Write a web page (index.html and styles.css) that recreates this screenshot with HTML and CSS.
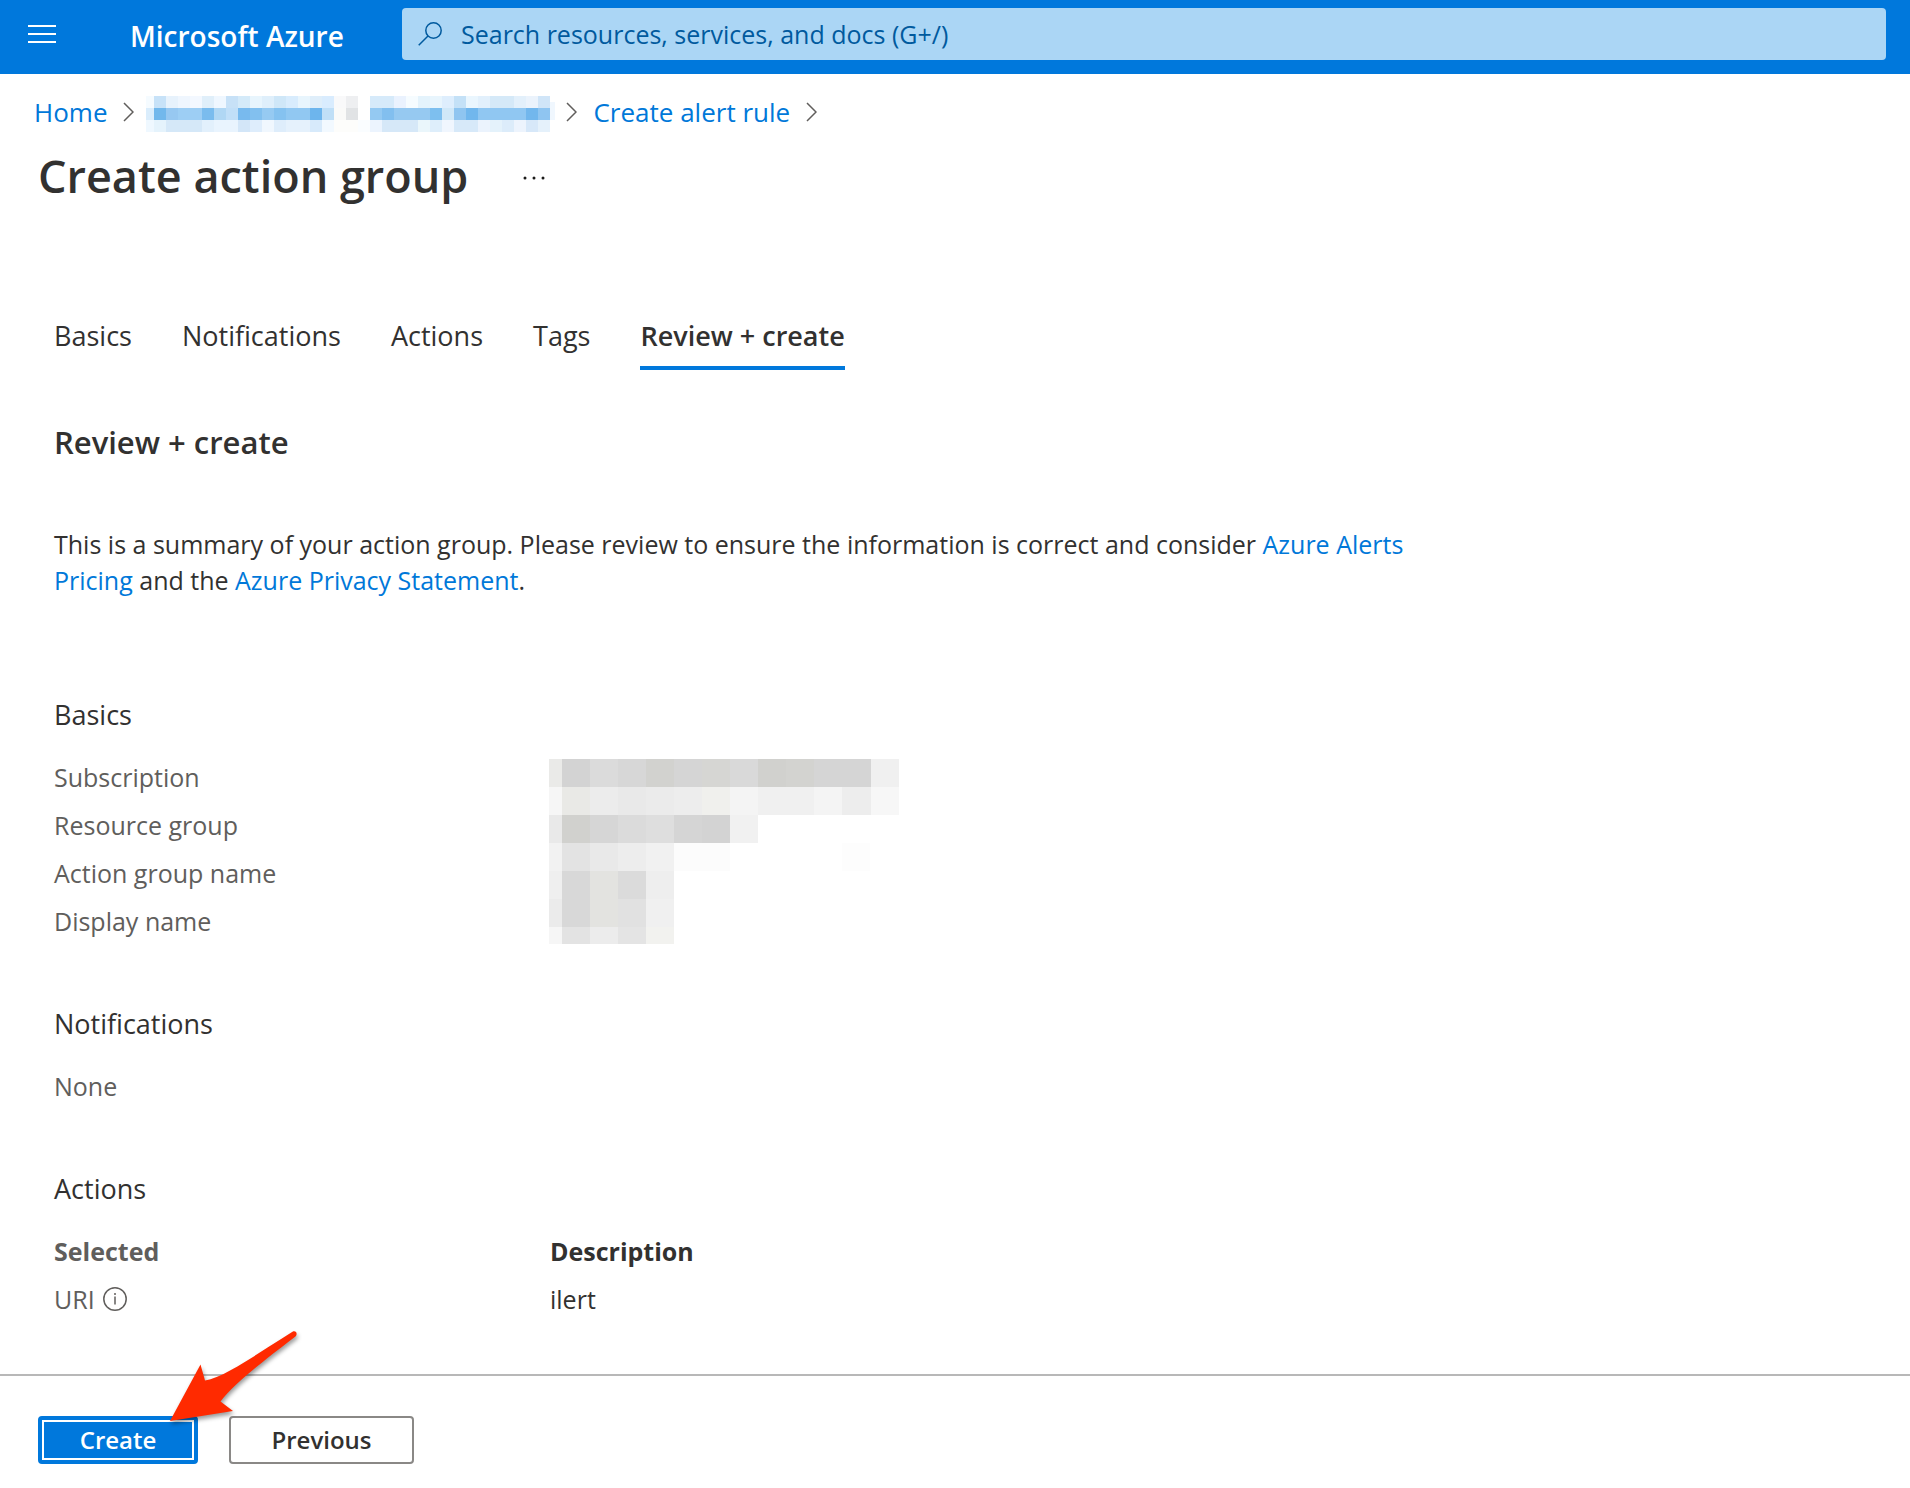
FILE: index.html
```html
<!DOCTYPE html>
<html lang="en">
<head>
<meta charset="utf-8">
<title>Create action group - Microsoft Azure</title>
<meta name="viewport" content="width=device-width, initial-scale=1">
<link rel="stylesheet" href="styles.css">
</head>
<body>
<header class="topbar">
  <button class="menu-button" type="button" aria-label="Show portal menu">
    <svg width="28" height="18" viewBox="0 0 28 18"><path d="M0 1h28M0 9h28M0 17h28" stroke="#fff" stroke-width="2"/></svg>
  </button>
  <a class="brand" href="#">Microsoft Azure</a>
  <label class="search">
    <svg width="24" height="24" viewBox="0 0 24 24" fill="none" stroke="#005a9e" stroke-width="1.500" aria-hidden="true"><circle cx="15.500" cy="8.500" r="7.700"/><path d="M10.200 13.800L.7 23.300"/></svg>
    <input class="search-input" type="text" aria-label="Search" placeholder="Search resources, services, and docs (G+/)">
  </label>
</header>

<nav class="breadcrumb" aria-label="Breadcrumb">
  <a href="#">Home</a>
  <svg class="chevron" viewBox="0 0 11 20"><path d="M1 1l9 9-9 9"/></svg>
  <a class="redacted-link" href="#" aria-label="Hidden resource">
    <svg width="410" height="36" viewBox="0 0 410 36" shape-rendering="crispEdges">
      <path fill="#f5fbff" d="M0 0h8v12H0z"/><path fill="#c7e2f8" d="M8 0h12v12H8z"/><path fill="#e7f2fc" d="M20 0h12v12H20z"/><path fill="#eff6fe" d="M32 0h12v12H32z"/><path fill="#f3f8ff" d="M44 0h12v12H44z"/><path fill="#e0effa" d="M56 0h12v12H56z"/><path fill="#eff7ff" d="M68 0h12v12H68z"/><path fill="#c7e1f7" d="M80 0h12v12H80z"/><path fill="#d4eaf9" d="M92 0h12v12H92z"/><path fill="#e8f5fd" d="M104 0h12v12h-12z"/><path fill="#dfeffb" d="M116 0h12v12h-12z"/><path fill="#cfe7f8" d="M128 0h12v12h-12z"/><path fill="#d8ecfd" d="M140 0h12v12h-12z"/><path fill="#e8f5fd" d="M152 0h12v12h-12z"/><path fill="#dfeefa" d="M164 0h12v12h-12z"/><path fill="#d9ecfe" d="M176 0h12v12h-12z"/><path fill="#f9f9fa" d="M188 0h12v12h-12z"/><path fill="#eeeff1" d="M200 0h12v12h-12z"/><path fill="#d6eafa" d="M224 0h24v12h-24z"/><path fill="#eaf2fe" d="M248 0h12v12h-12z"/><path fill="#f6fcff" d="M260 0h12v12h-12z"/><path fill="#e4f3fc" d="M272 0h12v12h-12z"/><path fill="#e8f5fd" d="M284 0h12v12h-12z"/><path fill="#deeefd" d="M296 0h12v12h-12z"/><path fill="#c4e1f7" d="M308 0h12v12h-12z"/><path fill="#eaf6fe" d="M320 0h12v12h-12z"/><path fill="#e2f0fc" d="M332 0h12v12h-12z"/><path fill="#d5e9f8" d="M344 0h24v12h-24z"/><path fill="#e3f0fb" d="M368 0h12v12h-12z"/><path fill="#ebf3fc" d="M380 0h12v12h-12z"/><path fill="#d0e5f8" d="M392 0h12v12h-12z"/>
      <path fill="#daedfc" d="M0 12h8v12H0z"/><path fill="#72b8ec" d="M8 12h12v12H8z"/><path fill="#97c8f1" d="M20 12h12v12H20z"/><path fill="#9dcef4" d="M32 12h24v12H32z"/><path fill="#7abcee" d="M56 12h12v12H56z"/><path fill="#b0d7f4" d="M68 12h12v12H68z"/><path fill="#c1dff8" d="M80 12h12v12H80z"/><path fill="#78baee" d="M92 12h12v12H92z"/><path fill="#82c0ef" d="M104 12h12v12h-12z"/><path fill="#96caf2" d="M116 12h12v12h-12z"/><path fill="#85c2f0" d="M128 12h12v12h-12z"/><path fill="#91c8f2" d="M140 12h24v12h-24z"/><path fill="#6db5ed" d="M164 12h12v12h-12z"/><path fill="#c0dff7" d="M176 12h12v12h-12z"/><path fill="#fafaf9" d="M188 12h12v12h-12z"/><path fill="#e1e3e5" d="M200 12h12v12h-12z"/><path fill="#94c9f2" d="M224 12h12v12h-12z"/><path fill="#82bfef" d="M236 12h12v12h-12z"/><path fill="#96c9f1" d="M248 12h36v12h-36z"/><path fill="#7dbfef" d="M284 12h12v12h-12z"/><path fill="#d0e8f8" d="M296 12h12v12h-12z"/><path fill="#8fc5f0" d="M308 12h12v12h-12z"/><path fill="#71b7ed" d="M320 12h12v12h-12z"/><path fill="#90c7f2" d="M332 12h48v12h-48z"/><path fill="#72b7ed" d="M380 12h12v12h-12z"/><path fill="#8fc5f1" d="M392 12h12v12h-12z"/><path fill="#f0f7fe" d="M404 6h5v18h-5z"/>
      <path fill="#eff8ff" d="M0 24h8v12H0z"/><path fill="#e5f3fc" d="M8 24h12v12H8z"/><path fill="#d5e8f8" d="M20 24h36v12H20z"/><path fill="#e2f0fc" d="M56 24h12v12H56z"/><path fill="#e9f4fe" d="M68 24h24v12H68z"/><path fill="#d3e6f8" d="M92 24h12v12H92z"/><path fill="#deedfc" d="M104 24h12v12h-12z"/><path fill="#f0f7fe" d="M116 24h12v12h-12z"/><path fill="#deedfb" d="M128 24h12v12h-12z"/><path fill="#e5f1fc" d="M140 24h24v12h-24z"/><path fill="#d7eafb" d="M164 24h12v12h-12z"/><path fill="#f2f9ff" d="M176 24h12v12h-12z"/><path fill="#fdfdfb" d="M188 24h24v12h-24z"/><path fill="#fafdff" d="M212 24h12v12h-12z"/><path fill="#ecf4fe" d="M224 24h12v12h-12z"/><path fill="#d6e8f8" d="M236 24h36v12h-36z"/><path fill="#eaf6fb" d="M272 24h12v12h-12z"/><path fill="#deeefb" d="M284 24h12v12h-12z"/><path fill="#f0f6fe" d="M296 24h12v12h-12z"/><path fill="#d7e9f9" d="M308 24h24v12h-24z"/><path fill="#ebf3fd" d="M332 24h12v12h-12z"/><path fill="#e4f2fb" d="M344 24h12v12h-12z"/><path fill="#dcecfa" d="M356 24h12v12h-12z"/><path fill="#edf4fd" d="M368 24h12v12h-12z"/><path fill="#d7e8f9" d="M380 24h12v12h-12z"/><path fill="#e5f1fb" d="M392 24h12v12h-12z"/>
    </svg>
  </a>
  <svg class="chevron" viewBox="0 0 11 20"><path d="M1 1l9 9-9 9"/></svg>
  <a href="#">Create alert rule</a>
  <svg class="chevron" viewBox="0 0 11 20"><path d="M1 1l9 9-9 9"/></svg>
</nav>

<div class="title-row">
  <h1>Create action group</h1>
  <button class="more-button" type="button" aria-label="More actions">
    <svg width="24" height="4" viewBox="0 0 24 4" fill="#1b1a19"><circle cx="3" cy="2" r="1.500"/><circle cx="12" cy="2" r="1.500"/><circle cx="21" cy="2" r="1.500"/></svg>
  </button>
</div>

<main class="content">
  <nav class="tabs" aria-label="Steps">
    <a href="#">Basics</a>
    <a href="#">Notifications</a>
    <a href="#">Actions</a>
    <a href="#">Tags</a>
    <a class="active" href="#" aria-current="step">Review + create</a>
  </nav>

  <h2>Review + create</h2>
  <p class="intro">This is a summary of your action group. Please review to ensure the information is correct and consider <a href="#">Azure Alerts Pricing</a> and the <a href="#">Azure Privacy Statement</a>.</p>

  <section class="group">
    <h3>Basics</h3>
    <dl class="summary">
      <dt>Subscription</dt>
      <dt>Resource group</dt>
      <dt>Action group name</dt>
      <dt>Display name</dt>
      <dd>
        <svg width="350" height="185" viewBox="0 0 350 185" shape-rendering="crispEdges" aria-hidden="true">
          <path fill="#eaeae8" d="M0 0h13v28H0z"/><path fill="#d3d3d3" d="M13 0h28v28H13z"/><path fill="#dbdbdb" d="M41 0h28v28H41z"/><path fill="#d7d7d7" d="M69 0h28v28H69z"/><path fill="#d2d2cf" d="M97 0h28v28H97z"/><path fill="#d5d5d5" d="M125 0h28v28h-28z"/><path fill="#d6d6d3" d="M153 0h28v28h-28z"/><path fill="#d9d9d9" d="M181 0h28v28h-28z"/><path fill="#d1d1ce" d="M209 0h28v28h-28z"/><path fill="#d3d3d0" d="M237 0h28v28h-28z"/><path fill="#d5d5d5" d="M265 0h57v28h-57z"/><path fill="#f0f0f0" d="M322 0h28v28h-28z"/>
          <path fill="#f6f6f6" d="M0 28h13v28H0z"/><path fill="#e9e9e6" d="M13 28h28v28H13z"/><path fill="#ececec" d="M41 28h28v28H41z"/><path fill="#e9e9e9" d="M69 28h28v28H69z"/><path fill="#ebebeb" d="M97 28h28v28H97z"/><path fill="#ededed" d="M125 28h28v28h-28z"/><path fill="#f0f0ed" d="M153 28h28v28h-28z"/><path fill="#f4f4f4" d="M181 28h28v28h-28z"/><path fill="#f0f0f0" d="M209 28h56v28h-56z"/><path fill="#f4f4f4" d="M265 28h28v28h-28z"/><path fill="#ededed" d="M293 28h29v28h-29z"/><path fill="#f7f7f7" d="M322 28h28v28h-28z"/>
          <path fill="#e9e9e9" d="M0 56h13v28H0z"/><path fill="#d1d1ce" d="M13 56h28v28H13z"/><path fill="#d6d6d6" d="M41 56h28v28H41z"/><path fill="#dbdbdb" d="M69 56h28v28H69z"/><path fill="#dedede" d="M97 56h28v28H97z"/><path fill="#d5d5d5" d="M125 56h28v28h-28z"/><path fill="#d3d3d3" d="M153 56h28v28h-28z"/><path fill="#f1f1f1" d="M181 56h28v28h-28z"/>
          <path fill="#f2f2f2" d="M0 84h13v28H0z"/><path fill="#e3e3e3" d="M13 84h28v28H13z"/><path fill="#e9e9e9" d="M41 84h28v28H41z"/><path fill="#ededed" d="M69 84h28v28H69z"/><path fill="#f1f1f1" d="M97 84h28v28H97z"/><path fill="#fcfcfc" d="M125 84h56v28h-56z"/><path fill="#fdfdfd" d="M293 84h28v28h-28z"/>
          <path fill="#efefef" d="M0 112h13v28H0z"/><path fill="#d8d8d8" d="M13 112h28v56H13z"/><path fill="#e3e3e0" d="M41 112h28v56H41z"/><path fill="#dbdbdb" d="M69 112h28v28H69z"/><path fill="#eee" d="M97 112h28v28H97z"/>
          <path fill="#ebebeb" d="M0 140h13v28H0z"/><path fill="#e1e1e1" d="M69 140h28v28H69z"/><path fill="#f0f0f0" d="M97 140h28v28H97z"/>
          <path fill="#f6f6f6" d="M0 168h13v17H0z"/><path fill="#e3e3e3" d="M13 168h28v17H13z"/><path fill="#ececec" d="M41 168h28v17H41z"/><path fill="#e4e4e4" d="M69 168h28v17H69z"/><path fill="#f2f2ef" d="M97 168h28v17H97z"/>
        </svg>
      </dd>
    </dl>
  </section>

  <section class="group">
    <h3>Notifications</h3>
    <p class="empty">None</p>
  </section>

  <section class="group">
    <h3>Actions</h3>
    <table class="actions">
      <thead>
        <tr><th class="muted" scope="col">Selected</th><th scope="col">Description</th></tr>
      </thead>
      <tbody>
        <tr>
          <td class="muted"><span class="with-info">URI
            <svg width="24" height="24" viewBox="0 0 24 24" fill="none" stroke="#605e5c" stroke-width="1.500" role="img" aria-label="Info"><circle cx="12" cy="12" r="11.200"/><path d="M12 9.500V17.500"/><path d="M12 6v2"/></svg>
          </span></td>
          <td>ilert</td>
        </tr>
      </tbody>
    </table>
  </section>
</main>

<footer class="actionbar">
  <button class="button primary" type="button">Create</button>
  <button class="button" type="button">Previous</button>
  <svg class="pointer" width="140" height="104" viewBox="0 0 140 104" aria-hidden="true"><path fill="#ff2a00" d="M10 97L40.500 40.500L45 56.500C65 53 95 31 132.500 7.800C136 6 138 10 135.500 12.500C98 41 72 62 60.500 77.500L73 87Z"/></svg>
</footer>
</body>
</html>
```
FILE: styles.css
```css
* {
  box-sizing: border-box;
}

body {
  margin: 0;
  min-height: 100vh;
  display: flex;
  flex-direction: column;
  background: #fff;
  color: #323130;
  font-family: "Open Sans", "Noto Sans", sans-serif;
  font-size: 25px;
  line-height: 36px;
}

h1,
h2,
h3,
p,
dl,
dd {
  margin: 0;
}

a {
  color: #0078d9;
  font-weight: 500;
  text-decoration: none;
}

button {
  font: inherit;
  cursor: pointer;
}

svg {
  display: block;
  flex: none;
}

/* Top bar */
.topbar {
  display: flex;
  align-items: center;
  height: 74px;
  padding: 0 24px 6px 28px;
  background: #0078dc;
}

.menu-button,
.more-button {
  padding: 0;
  border: 0;
  background: none;
}

.brand {
  width: 272px;
  margin-left: 74px;
  padding-top: 4px;
  color: #fff;
  font-size: 28px;
  font-weight: 600;
  white-space: nowrap;
}

.search {
  flex: 1;
  display: flex;
  align-items: center;
  gap: 19px;
  height: 52px;
  padding: 0 16px;
  border-radius: 4px;
  background: #abd6f5;
}

.search-input {
  flex: 1;
  min-width: 0;
  padding: 0;
  border: 0;
  outline: 0;
  background: none;
  color: #005a9e;
  font: inherit;
}

.search-input::placeholder {
  color: #005a9e;
  opacity: 1;
}

/* Breadcrumb */
.breadcrumb {
  display: flex;
  align-items: center;
  gap: 16px;
  padding: 18px 34px 0;
  font-size: 26px;
  white-space: nowrap;
}

.redacted-link {
  margin: 4px -6px 0 -4px;
}

.chevron {
  width: 11px;
  height: 20px;
  fill: none;
  stroke: #605e5c;
  stroke-width: 1.5;
}

/* Title */
.title-row {
  display: flex;
  align-items: center;
  gap: 54px;
  padding: 14px 38px 0;
}

h1 {
  font-size: 45px;
  font-weight: 600;
  line-height: 60px;
}

.more-button {
  padding-top: 4px;
}

/* Main column */
.content {
  flex: 1;
  padding: 112px 54px 0;
}

.tabs {
  display: flex;
  gap: 50px;
  font-size: 27px;
  white-space: nowrap;
}

.tabs a {
  padding-bottom: 12px;
  border-bottom: 4px solid transparent;
  color: #323130;
  font-weight: 400;
}

.tabs .active {
  border-color: #0078dc;
  font-weight: 600;
}

h2 {
  margin-top: 52px;
  font-size: 31px;
  font-weight: 600;
  line-height: 40px;
}

.intro {
  max-width: 1370px;
  margin: 64px 0 99px;
}

.group {
  margin-bottom: 61px;
}

.group:last-child {
  margin-bottom: 48px;
}

h3 {
  margin-bottom: 20px;
  font-size: 27px;
  font-weight: 400;
  line-height: 36px;
}

.summary {
  display: grid;
  grid-template-columns: 495px 1fr;
  grid-auto-rows: 48px;
  color: #605e5c;
  line-height: 48px;
}

.summary dt {
  grid-column: 1;
}

.summary dd {
  grid-column: 2;
  grid-row: 1 / span 4;
  padding-top: 6px;
}

.empty {
  color: #605e5c;
  line-height: 48px;
}

.actions {
  border-collapse: collapse;
  line-height: 48px;
}

.actions th,
.actions td {
  min-width: 496px;
  padding: 0;
  text-align: left;
}

.actions th {
  font-weight: 700;
}

.actions .muted {
  color: #605e5c;
}

.with-info {
  display: flex;
  align-items: center;
  gap: 8px;
}

/* Footer */
.actionbar {
  position: relative;
  display: flex;
  gap: 31px;
  padding: 40px 38px 24px;
  border-top: 2px solid #b8b8b8;
}

.button {
  min-width: 185px;
  height: 48px;
  padding: 0 20px;
  border: 2px solid #8a8886;
  border-radius: 4px;
  background: #fff;
  color: #323130;
  font-size: 24px;
  font-weight: 600;
  line-height: 40px;
}

.primary {
  min-width: 160px;
  border: 4px solid #0078dc;
  background: #0078dc;
  box-shadow: inset 0 0 0 2px #fff;
  color: #fff;
}

.pointer {
  position: absolute;
  top: -52px;
  left: 160px;
  filter: drop-shadow(1px 3px 2px rgba(0, 0, 0, 0.4));
  pointer-events: none;
}
```
